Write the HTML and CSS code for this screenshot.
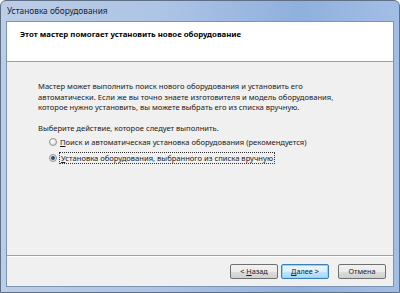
FILE: index.html
```html
<!DOCTYPE html>
<html lang="ru">
<head>
  <meta charset="UTF-8">
  <title>Установка оборудования</title>
  <link rel="stylesheet" href="styles.css">
</head>
<body>

  <div class="window">
    <div class="titlebar">Установка оборудования</div>

    <div class="client">
      <div class="header">
        <h1>Этот мастер помогает установить новое оборудование</h1>
      </div>

      <div class="content">
        <p class="intro">
          Мастер может выполнить поиск нового оборудования и установить его
          автоматически. Если же вы точно знаете изготовителя и модель оборудования,
          которое нужно установить, вы можете выбрать его из списка вручную.
        </p>

        <p class="ask">Выберите действие, которое следует выполнить.</p>

        <div class="options">
          <label class="option">
            <span class="radio"></span>
            <span class="text"><u>П</u>оиск и автоматическая установка оборудования (рекомендуется)</span>
          </label>
          <label class="option">
            <span class="radio checked"></span>
            <span class="text focus"><u>У</u>становка оборудования, выбранного из списка вручную</span>
          </label>
        </div>
      </div>

      <div class="footer">
        <button class="btn">&lt; <u>Н</u>азад</button>
        <button class="btn default"><u>Д</u>алее &gt;</button>
        <button class="btn cancel">Отмена</button>
      </div>
    </div>
  </div>

</body>
</html>
```

FILE: styles.css
```css
* {
  margin: 0;
  padding: 0;
  box-sizing: border-box;
}

body {
  font-family: 'Noto Sans', 'DejaVu Sans', sans-serif;
  font-size: 7.6px;
  color: #1a1a1a;
  width: 400px;
  height: 293px;
  overflow: hidden;
}

.window {
  width: 400px;
  height: 293px;
  display: flex;
  flex-direction: column;
  background: linear-gradient(90deg, #bccde6 0%, #adc4e5 40%, #8fb0de 75%, #a3bee5 100%);
  border: 1px solid #5f6f86;
  border-radius: 6px 6px 0 0;
  padding: 0 5px 5px 5px;
}

.titlebar {
  height: 20px;
  line-height: 20px;
  padding-left: 1px;
  font-size: 8.3px;
  color: #1c2330;
  flex-shrink: 0;
}

.client {
  flex: 1;
  display: flex;
  flex-direction: column;
  background-color: #f0f0f0;
  border: 1px solid #7d93b4;
}

.header {
  height: 40px;
  background-color: #fff;
  border-bottom: 1px solid #a0a0a0;
  padding: 7px 0 0 13px;
  flex-shrink: 0;
}

.header h1 {
  font-size: 7.8px;
  font-weight: bold;
  color: #000;
}

.content {
  flex: 1;
  padding: 19px 0 0 31px;
}

.intro {
  line-height: 10.5px;
  width: 320px;
  margin-bottom: 10px;
}

.ask {
  margin-bottom: 4px;
}

.options {
  padding-left: 11px;
  display: flex;
  flex-direction: column;
  gap: 5px;
}

.option {
  display: flex;
  align-items: center;
  gap: 3px;
  height: 11px;
}

.radio {
  width: 8px;
  height: 8px;
  border-radius: 50%;
  border: 1px solid #8e8f8f;
  background: radial-gradient(circle at 40% 35%, #ffffff 0%, #e6e6e6 60%, #d0d0d0 100%);
  position: relative;
}

.radio.checked::after {
  content: '';
  position: absolute;
  left: 1px;
  top: 1px;
  width: 4px;
  height: 4px;
  border-radius: 50%;
  background: radial-gradient(circle at 40% 40%, #3c5d85 0%, #1b3a62 50%, #6fa0d8 100%);
}

.text.focus {
  outline: 1px dotted #333;
  outline-offset: 0;
  padding: 0 1px;
}

.footer {
  height: 31px;
  border-top: 1px solid #a0a0a0;
  box-shadow: inset 0 1px 0 #fff;
  display: flex;
  justify-content: flex-end;
  align-items: center;
  gap: 3px;
  padding-right: 7px;
  flex-shrink: 0;
}

.btn {
  font-family: inherit;
  font-size: 7.3px;
  width: 48px;
  height: 15px;
  color: #1a1a1a;
  border: 1px solid #707070;
  border-radius: 2px;
  background: linear-gradient(#f2f2f2 0%, #ebebeb 50%, #dddddd 51%, #cfcfcf 100%);
}

.btn.default {
  border-color: #3c7fb1;
  box-shadow: inset 0 0 0 1px #8fd5f5;
  background: linear-gradient(#eaf6fd 0%, #d9f0fc 50%, #bee6fd 51%, #a7d9f5 100%);
}

.btn.cancel {
  margin-left: 6px;
}
```
